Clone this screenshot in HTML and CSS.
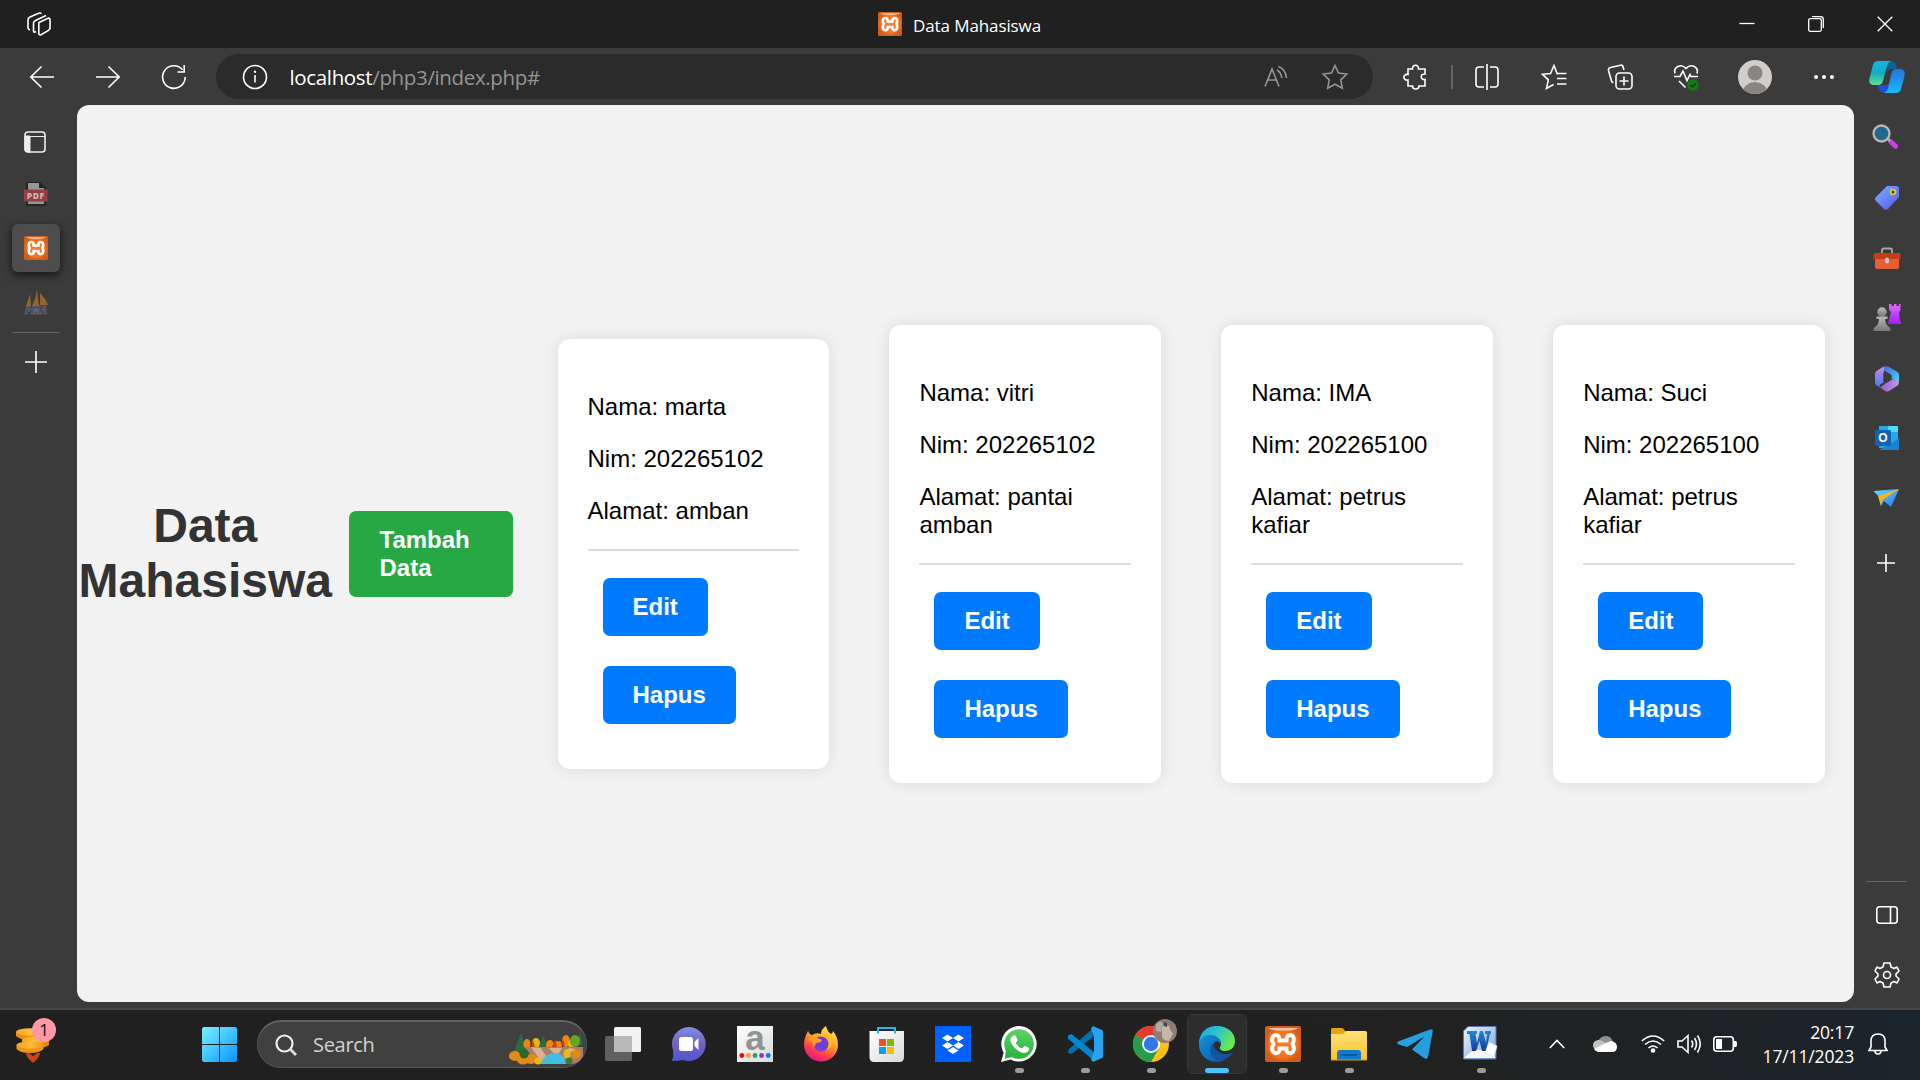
FILE: index.html
```html
<!DOCTYPE html>
<html lang="id">
<head>
<meta charset="utf-8">
<title>Data Mahasiswa</title>
<link rel="stylesheet" href="styles.css">
</head>
<body>
<svg class="defs" width="0" height="0" aria-hidden="true">
  <defs>
    <radialGradient id="orange"><stop offset="0" stop-color="#ff7b25"/><stop offset=".75" stop-color="#f5731f"/><stop offset="1" stop-color="#cf5f1b"/></radialGradient>
    <linearGradient id="win" x2="1" y2="1"><stop stop-color="#7af2ff"/><stop offset="1" stop-color="#0a94ff"/></linearGradient>
    <linearGradient id="cyanGreen" x2="0" y2="1"><stop stop-color="#14b5ea"/><stop offset=".5" stop-color="#12abc5"/><stop offset="1" stop-color="#62df8e"/></linearGradient>
    <linearGradient id="blueCyan" x2="0" y2="1"><stop stop-color="#2474dd"/><stop offset="1" stop-color="#18b9fb"/></linearGradient>
    <linearGradient id="tag" x2="1" y2="1"><stop stop-color="#76b4ff"/><stop offset="1" stop-color="#5954f0"/></linearGradient>
    <linearGradient id="purple" x2="0" y2="1"><stop stop-color="#e06bf5"/><stop offset="1" stop-color="#9b1fff"/></linearGradient>
    <linearGradient id="grey" x2="0" y2="1"><stop stop-color="#b9b9b9"/><stop offset="1" stop-color="#777"/></linearGradient>
    <linearGradient id="plane" x2="1" y2="1"><stop stop-color="#5fe0ff"/><stop offset="1" stop-color="#2d72ee"/></linearGradient>
    <linearGradient id="coin" x2="1" y2="0"><stop stop-color="#f9a21e"/><stop offset=".5" stop-color="#ffbe3c"/><stop offset="1" stop-color="#f0921a"/></linearGradient>
    <linearGradient id="chat" x2="0" y2="1"><stop stop-color="#7d8fe8"/><stop offset=".5" stop-color="#7462bd"/><stop offset="1" stop-color="#4f56d2"/></linearGradient>
    <linearGradient id="fox" x1=".8" x2=".3" y2="1"><stop stop-color="#fff04a"/><stop offset=".45" stop-color="#ff9a24"/><stop offset=".75" stop-color="#ff3c4b"/><stop offset="1" stop-color="#e3138b"/></linearGradient>
    <linearGradient id="bag" x2="1" y2="1"><stop stop-color="#fff"/><stop offset="1" stop-color="#d9d9d9"/></linearGradient>
    <linearGradient id="wa" x2="0" y2="1"><stop stop-color="#5ed267"/><stop offset="1" stop-color="#26b33f"/></linearGradient>
    <linearGradient id="edgeTop" x2="1" y2=".4"><stop stop-color="#1f9ee0"/><stop offset=".5" stop-color="#2bc3d2"/><stop offset="1" stop-color="#68e84c"/></linearGradient>
    <linearGradient id="edgeLow" x2="1" y2="1"><stop stop-color="#1691d9"/><stop offset="1" stop-color="#0a55a8"/></linearGradient>
    <linearGradient id="folder" x2="0" y2="1"><stop stop-color="#ffe07a"/><stop offset="1" stop-color="#fdc225"/></linearGradient>
    <linearGradient id="word" x2="1" y2="1"><stop stop-color="#e9f1fb"/><stop offset="1" stop-color="#7fa3d8"/></linearGradient>
    <linearGradient id="wordW" x2="0" y2="1"><stop stop-color="#1d8ad6"/><stop offset="1" stop-color="#173a94"/></linearGradient>
    <linearGradient id="mA" x2="0" y2="1"><stop stop-color="#c48be6"/><stop offset="1" stop-color="#4a7bec"/></linearGradient>
    <linearGradient id="mB" x2="1" y2="1"><stop stop-color="#3d6fdc"/><stop offset="1" stop-color="#4fd2fb"/></linearGradient>
    <linearGradient id="mC" x2="1" y2="0"><stop stop-color="#8c5fcc"/><stop offset="1" stop-color="#c994e4"/></linearGradient>
    <clipPath id="avatarClip"><circle cx="17" cy="17" r="17"/></clipPath>
    <symbol id="xampp" viewBox="0 0 36 36">
      <rect width="36" height="36" rx="2.5" fill="url(#orange)"/>
      <path d="M3.500 2H32.500C31 4 27 4.500 18 4.500S5 4 3.500 2Z" fill="#fff" opacity=".6"/>
      <path d="M14.500 14.500C14.500 11 13 9 11 9C7.500 9 5.800 13.500 8.500 18C5.800 22.500 7.500 27.200 11 27.200C14 27.200 14.800 25 14.600 22.500H21.400C21.200 25 22 27.200 25 27.200C28.500 27.200 30.200 22.500 27.500 18C30.200 13.500 28.500 9 25 9C23 9 21.500 11 21.500 14.500Z" fill="none" stroke="#fff" stroke-width="4"/>
    </symbol>
  </defs>
</svg>

<header class="titlebar">
  <svg class="workspaces" viewBox="0 0 24 24" width="24" height="24"><g class="line"><path d="M12 10.500 21 6.200Q22.800 5.800 23 8V16.500L21.500 18.500 14 22.800Q11.800 23.500 11.800 21V11.500Z"/><path d="M19 3.500 8.500 8.500Q6.500 9.500 6.500 11V19Q7 21 9 19.500"/><path d="M14.500 1.500Q13 .5 11 1.500L3 5Q1 6 1 8V16Q1.200 17.500 3 18"/></g></svg>
  <div class="window-title"><svg width="24" height="24"><use href="#xampp"/></svg><span>Data Mahasiswa</span></div>
  <div class="window-controls">
    <svg viewBox="0 0 16 16" width="16" height="16"><path class="line thin" d="M.5 7.500H15.500"/></svg>
    <svg viewBox="0 0 16 16" width="16" height="16"><g class="line thin"><rect x=".7" y="2.700" width="12.600" height="12.600" rx="1.500"/><path d="M4 .7H12.500Q15.300 .7 15.300 3.500V12"/></g></svg>
    <svg viewBox="0 0 16 16" width="16" height="16"><path class="line thin" d="M.7.7 15.300 15.300M15.300.7.7 15.300"/></svg>
  </div>
</header>

<nav class="toolbar">
  <div class="nav-buttons">
    <svg viewBox="0 0 24 24" width="24" height="24"><path class="line" d="M24 12H.8M11.500 1.500.8 12 11.500 22.500"/></svg>
    <svg viewBox="0 0 24 24" width="24" height="24"><path class="line" d="M0 12H23.200M12.500 1.500 23.200 12 12.500 22.500"/></svg>
    <svg viewBox="0 0 24 24" width="24" height="24"><path class="line" d="M23.200 12A11.300 11.300 0 1 1 20.500 4.700M22.200 0V7H15.500"/></svg>
  </div>
  <div class="address">
    <svg class="info" viewBox="0 0 26 26" width="26" height="26"><circle class="line" cx="13" cy="13" r="11.500"/><path class="line" d="M13 11V18.500"/><circle cx="13" cy="7.800" r="1.200" fill="#fff"/></svg>
    <span class="url"><b>localhost</b>/php3/index.php#</span>
    <svg class="read-aloud" viewBox="0 0 24 24" width="24" height="24"><path class="line dim" d="M1 21.500 8 4 15 21.500M3.500 15H12.500M13 5Q17 7.500 17.800 13M14.500 1.500Q21.500 4 22.500 13"/></svg>
    <svg class="fav" viewBox="0 0 26 26" width="26" height="26"><path class="line dim" d="M13 1.500 16.500 9 24.800 10 18.800 15.800 20.300 24.200 13 20.200 5.700 24.200 7.200 15.800 1.200 10 9.500 9Z"/></svg>
  </div>
  <div class="actions">
    <svg class="a-ext" viewBox="0 0 24 26" width="24" height="26"><path class="line" d="M5 5H9.500C9 0 16 0 15.500 5H22V10C17 9.500 17 16 22 15.500V22H16C16 26 9.500 26 9.500 22H5V16C-.5 17 -.5 9.500 5 10.500Z"/></svg>
    <i class="a-sep"></i>
    <svg class="a-split" viewBox="0 0 24 26" width="24" height="26"><path class="line" d="M9 3H4Q1 3 1 6V20Q1 23 4 23H9M15 3H20Q23 3 23 6V20Q23 23 20 23H15M12 0V26"/></svg>
    <svg class="a-favs" viewBox="0 0 26 26" width="26" height="26"><path class="line" d="M16.500 10.500 13 1.500 9.500 9.500 1.500 10.300 7.300 15.800 5.500 24.500 12.500 20.500M16.500 9.500H25.500M16 14.500H25.500M16 20H25.500"/></svg>
    <svg class="a-coll" viewBox="0 0 26 26" width="26" height="26"><g class="line"><rect x="9" y="9" width="16" height="16" rx="3.500"/><path d="M17 12.500V21.500M12.500 17H21.500M17 6 16 2.500Q15.500.8 13.500 1.200L3.500 3.500Q1 4.200 1.500 6.500L4.500 17Q5 18.800 6.500 18.500"/></g></svg>
    <svg class="a-heart" viewBox="0 0 26 28" width="26" height="28"><path class="line" d="M2 10.500C0 4 8 0 13 5.500C18 0 26 4 24 10.500M1 13.500H7L10 8 14 17.500 17 11.500 18 13.500H25M6 18 12.500 24.500"/><circle cx="20" cy="22" r="5.700" fill="#107c10"/><path d="M17.300 22 19.300 24 23 20.300" fill="none" stroke="#213421" stroke-width="1.300"/></svg>
    <svg class="a-user" viewBox="0 0 34 34" width="34" height="34"><circle cx="17" cy="17" r="17" fill="#d0cdca"/><g fill="#888583" clip-path="url(#avatarClip)"><circle cx="17" cy="13" r="7.500"/><ellipse cx="17" cy="32" rx="12" ry="10"/></g></svg>
    <svg class="a-dots" viewBox="0 0 20 6" width="20" height="6"><g fill="#fff"><circle cx="2" cy="3" r="2"/><circle cx="10" cy="3" r="2"/><circle cx="18" cy="3" r="2"/></g></svg>
    <svg class="a-copilot" viewBox="0 0 36 34" width="36" height="34"><path d="M17 1H22Q26 1 27 5L28 9H22Q19 9 18 13Z" fill="#0b6390"/><path d="M8 25H18L21 22 17 33H16Q11 33 10 29Z" fill="#204ed7"/><path d="M9 1H22Q19 2 18 6L14 21Q13 25 9 25H4Q-1 24 .5 18L4 5Q5 1 9 1Z" fill="url(#cyanGreen)"/><path d="M27 9H32Q37 10 35.500 16L32 29Q31 33 27 33H15Q18 32 19 28L22.500 13Q23.500 9 27 9Z" fill="url(#blueCyan)"/></svg>
  </div>
</nav>

<div class="middle">
  <aside class="tabs">
    <div class="tab tab-panel"><svg viewBox="0 0 22 22" width="22" height="22"><rect x="1" y="1" width="20" height="20" rx="3" fill="none" stroke="#eee" stroke-width="1.600"/><path d="M1 5.500H21M1 5H6V21H3Q1 20 1 18Z" fill="#eee" stroke="#eee" stroke-width="1"/></svg></div>
    <div class="tab tab-pdf"><svg viewBox="0 0 24 24" width="24" height="24"><path d="M2 0H16L22 6V24H2Z" fill="#252525"/><path d="M4 1H15V6H20V22H4Z" fill="#969696"/><path d="M0 7.500H23.500V19.500H0Z" fill="#983f42"/><text x="11.800" y="16.800" class="pdf-text">PDF</text></svg></div>
    <div class="tab tab-active"><svg width="24" height="24"><use href="#xampp"/></svg></div>
    <div class="tab tab-pma"><svg viewBox="0 0 24 24" width="24" height="24"><path d="M2 16 6 4 7 16ZM8 16Q12 8 13 0L15 16ZM16 15 16 3Q22 9 24 15Z" fill="#94642b"/><text x="12" y="23.500" class="pma-text">PMA</text></svg></div>
    <i class="rule"></i>
    <div class="tab tab-new"><svg viewBox="0 0 22 22" width="22" height="22"><path class="line" d="M11 0V22M0 11H22"/></svg></div>
  </aside>

  <main class="page">
    <h1>Data Mahasiswa</h1>
    <a class="button button-add">Tambah Data</a>
    <section class="card"><p>Nama: marta</p><p>Nim: 202265102</p><p>Alamat: amban</p><div class="card-actions"><a class="button">Edit</a><a class="button">Hapus</a></div></section>
    <section class="card"><p>Nama: vitri</p><p>Nim: 202265102</p><p>Alamat: pantai amban</p><div class="card-actions"><a class="button">Edit</a><a class="button">Hapus</a></div></section>
    <section class="card"><p>Nama: IMA</p><p>Nim: 202265100</p><p>Alamat: petrus kafiar</p><div class="card-actions"><a class="button">Edit</a><a class="button">Hapus</a></div></section>
    <section class="card"><p>Nama: Suci</p><p>Nim: 202265100</p><p>Alamat: petrus kafiar</p><div class="card-actions"><a class="button">Edit</a><a class="button">Hapus</a></div></section>
  </main>

  <aside class="sidebar">
    <div class="side side-search"><svg viewBox="0 0 28 28" width="28" height="28"><path d="M19 19 23.500 23.200" stroke="#c542ed" stroke-width="5" stroke-linecap="round"/><path d="M15 15 18 18" stroke="#aaa" stroke-width="3"/><circle cx="9.500" cy="10.500" r="8" fill="#22678c" stroke="#b9b6b4" stroke-width="2.300"/></svg></div>
    <div class="side"><svg viewBox="0 0 28 28" width="28" height="28"><path d="M14 2H23Q26 2 26 5V13L15 25Q13 26.500 11 25L3 17Q1 15 3 13Z" fill="url(#tag)"/><circle cx="20" cy="8" r="2.400" fill="#334" stroke="#f2cc0c" stroke-width="1.800"/></svg></div>
    <div class="side"><svg viewBox="0 0 28 28" width="28" height="28"><path d="M9 9V6Q9 4.500 11 4.500H17Q19 4.500 19 6V9" fill="none" stroke="#a9a9a9" stroke-width="1.800"/><path d="M2 13H26V23Q26 25 24 25H4Q2 25 2 23Z" fill="#e85e34"/><path d="M2 9H26Q27.500 9 27.500 11V15H.5V11Q.5 9 2 9Z" fill="#c43e12"/><rect x="12" y="13.500" width="4" height="6" rx="2" fill="#c9c9c9"/></svg></div>
    <div class="side"><svg viewBox="0 0 28 28" width="28" height="28"><path d="M16 0H18.500V2H21V0H23.500V2H26V0H27.500V6L26 8 27 17H28V20H15L18 8 16 6Z" fill="url(#purple)"/><g fill="url(#grey)"><circle cx="9" cy="8" r="4.700"/><path d="M3.500 12.500H14.500V15H12Q12 20 16 23Q18 24 17.500 27H.5Q0 24 2 23Q6 20 6 15H3.500Z"/></g></svg></div>
    <div class="side side-365"><svg viewBox="0 0 28 28" width="28" height="28"><path d="M12 1.500Q10.500 1.500 9 2.500L3.500 6Q2 7 2 9V17.500Q2 19 3.500 20.500L7 22.500Q6 21 7 19.500L10.500 17.500V8Z" fill="url(#mA)"/><path d="M12 1.500Q14 .8 16 2L24.500 7Q26 8 26 10V17.500L18.500 13.500V10L11 5.500Q10.500 2.500 12 1.500Z" fill="url(#mB)"/><path d="M26 16.500Q26 19.500 24.500 20.500L16 26Q14 27 12 26L7 22.500 18.500 14Z" fill="url(#mC)"/><path d="M10.500 8.500 14 7.500 18.500 10V15L14 17.800 10.500 16Z" fill="#3b3b3b"/></svg></div>
    <div class="side"><svg viewBox="0 0 28 28" width="28" height="28"><path d="M6 2H25V24H6Z" fill="#28a8ea"/><path d="M15 2H25V8H15Z" fill="#50d9ff"/><path d="M15 8H25V14H15Z" fill="#28a8ea"/><path d="M6 26H26V14L17 20Z" fill="#1784d2"/><rect x="2" y="6" width="16" height="16" rx="1.500" fill="#0f64b8"/><text x="9.800" y="18.300" class="outlook-text">O</text></svg></div>
    <div class="side"><svg viewBox="0 0 28 28" width="28" height="28"><path d="M.5 7 26 5 18 23 11 17 8 22 6 13Z" fill="url(#plane)"/><path d="M26 5 5 12 8 22 9.500 16Z" fill="#f8b515"/></svg></div>
    <div class="side side-plus"><svg viewBox="0 0 18 18" width="18" height="18"><path class="line" d="M9 0V18M0 9H18"/></svg></div>
    <i class="rule"></i>
    <div class="side"><svg viewBox="0 0 22 18" width="22" height="18"><rect class="line" x=".8" y=".8" width="20.400" height="16.400" rx="3"/><path class="line" d="M14.500 1V17"/></svg></div>
    <div class="side"><svg viewBox="0 0 26 28" width="26" height="28"><g class="line"><circle cx="13" cy="14" r="3.500"/><path d="M10 2H16L17 6 20 7.500 23 6 25 10 22 13V15L25 18 23 22 20 20.500 17 22 16 26H10L9 22 6 20.500 3 22 1 18 4 15V13L1 10 3 6 6 7.500 9 6Z" stroke-linejoin="round"/></g></svg></div>
  </aside>
</div>

<footer class="taskbar">
  <div class="widgets"><svg viewBox="0 0 34 36" width="34" height="36"><path d="M0 5V9Q4 13 14 13T28 9V5Z" fill="#ee8c12"/><ellipse cx="14" cy="5" rx="14" ry="3.800" fill="url(#coin)"/><path d="M6 13V18Q10 21 20 21T33 18V13Z" fill="#e88410"/><ellipse cx="19.500" cy="13" rx="13.500" ry="3.600" fill="url(#coin)"/><path d="M.5 18V22Q4 26 14 26T27.500 22V18Z" fill="#f09418"/><ellipse cx="14" cy="18" rx="13.500" ry="3.600" fill="url(#coin)"/></svg><svg class="heart" viewBox="0 0 14 10" width="14" height="10"><path d="M0 0Q2-1 7 3Q12-1 14 0Q14 4 7 10Q0 4 0 0Z" fill="#cf4214"/></svg><span class="badge">1</span></div>
  <svg class="start" viewBox="0 0 35 35" width="35" height="35"><path d="M1.500 0H17V17H0V1.500ZM18 0H33.500L35 1.500V17H18ZM0 18H17V35H1.500L0 33.500ZM18 18H35V33.500L33.500 35H18Z" fill="url(#win)"/></svg>
  <div class="search">
    <svg viewBox="0 0 22 22" width="22" height="22"><circle cx="9.500" cy="9.500" r="8" fill="none" stroke="#eee" stroke-width="2.200"/><path d="M15 15 21 21" stroke="#ddd" stroke-width="2.800"/></svg>
    <span>Search</span>
    <svg class="scene" viewBox="0 0 74 32" width="74" height="32"><path d="M5 18 12 0 18 18ZM30 14 34 2 39 14ZM66 12 71 0 74 12Z" fill="#2c6b3e"/><g fill="#f08612"><ellipse cx="18" cy="11" rx="3.500" ry="5"/><ellipse cx="41" cy="12" rx="4" ry="5"/><ellipse cx="49" cy="12" rx="4" ry="4"/><ellipse cx="57" cy="8" rx="4" ry="6"/></g><g fill="#e4b514"><ellipse cx="27" cy="10" rx="4" ry="5"/><ellipse cx="62" cy="11" rx="3" ry="4"/></g><ellipse cx="66" cy="8" rx="5" ry="6" fill="#65a825"/><path d="M22 14 24 7 26 14ZM43 14 46 6 48 14ZM52 12 54 6 56 12Z" fill="#cc3b16"/><path d="M16 14H74V23Q70 31 62 31H28Z" fill="#a97d67"/><path d="M22 14 34 31H42L32 15ZM40 15 48 24 53 15ZM60 15 56 23 67 16Z" fill="#d9b196"/><path d="M31 31Q36 20 46 20Q55 20 57 31Z" fill="#43bde0"/><g fill="#e38a12"><ellipse cx="6" cy="23" rx="6" ry="5"/><ellipse cx="22" cy="26" rx="7" ry="5"/><ellipse cx="14" cy="27" rx="6" ry="4.500"/><circle cx="67" cy="21" r="4.500"/></g><g fill="#e9b91b"><circle cx="29" cy="28" r="3.500"/><ellipse cx="58" cy="21" rx="3.500" ry="5"/></g><circle cx="15" cy="21" r="4.500" fill="#27682d"/><circle cx="60" cy="28" r="3.500" fill="#387b2d"/></svg>
  </div>
  <div class="apps">
    <div class="app"><svg viewBox="0 0 36 36" width="36" height="36"><rect x="0" y="10" width="27" height="25" rx="1.500" fill="#606060"/><rect x="9" y="1" width="27" height="25" rx="1.500" fill="#f2f2f2"/><path d="M9 10H27V26H9Z" fill="#b9b9b9"/></svg></div>
    <div class="app"><svg viewBox="0 0 36 36" width="36" height="36"><path d="M18 1A17 17 0 1 1 12 34Q8 35 1 35Q3 30 2 24A17 17 0 0 1 18 1Z" fill="url(#chat)"/><rect x="8" y="11" width="14" height="14" rx="2.500" fill="#fff"/><path d="M23.500 16 27.500 12V24L23.500 20Z" fill="#fff"/></svg></div>
    <div class="app"><svg viewBox="0 0 36 36" width="36" height="36"><rect width="36" height="36" fill="url(#bag)"/><text x="18" y="23.500" class="amazon-text">a</text><circle cx="4.800" cy="29.500" r="2.400" fill="#f4000c"/><circle cx="11.400" cy="29.500" r="2.400" fill="#fd981b"/><circle cx="18" cy="29.500" r="2.400" fill="#16a762"/><circle cx="24.600" cy="29.500" r="2.400" fill="#9130d9"/><circle cx="31.200" cy="29.500" r="2.400" fill="#0583e8"/></svg></div>
    <div class="app"><svg viewBox="0 0 36 36" width="36" height="36"><path d="M5 5Q6 8 9 9Q13 6 18 8Q18 3 23 0Q24 5 28 8Q30 7 30 5Q35 11 35 19A17 16.500 0 0 1 1 19Q1 12 5 5Z" fill="url(#fox)"/><circle cx="18" cy="18" r="7.500" fill="#713edb"/><path d="M5 14Q9 8 14 12L19 14Q18 17 13 17Q12 18 12 21Q9 18 9 15Z" fill="#ffa12c"/><path d="M17 10Q25 10 26 17Q26 22 22 25Q30 22 29 14Q26 8 20 8Z" fill="#ffb628"/></svg></div>
    <div class="app"><svg viewBox="0 0 36 36" width="36" height="36"><path d="M.5 5H35V31Q35 36 30.500 36H5Q.5 36 .5 31Z" fill="url(#bag)"/><path d="M9 7.500V2H26V7.500" fill="none" stroke="#26b4ed" stroke-width="2"/><path fill="#f25022" d="M10 13H17V20H10Z"/><path fill="#7fba00" d="M18 13H25V20H18Z"/><path fill="#00a4ef" d="M10 21H17V28H10Z"/><path fill="#ffb900" d="M18 21H25V28H18Z"/></svg></div>
    <div class="app"><svg viewBox="0 0 36 36" width="36" height="36"><rect width="36" height="36" fill="#0061fe"/><path d="M12.500 8.500 18 12 12.500 15.500 7 12ZM23.500 8.500 29 12 23.500 15.500 18 12ZM12.500 16 18 19.500 12.500 23 7 19.500ZM23.500 16 29 19.500 23.500 23 18 19.500ZM18 21 23.500 24.500 18 28 12.500 24.500Z" fill="#fff"/></svg></div>
    <div class="app running"><svg viewBox="0 0 36 36" width="36" height="36"><path d="M18 0A17.800 17.800 0 1 1 9.500 33.500L0 36 2.700 26.700A17.800 17.800 0 0 1 18 0Z" fill="#fff"/><circle cx="18" cy="18" r="14.800" fill="url(#wa)"/><path d="M3.800 32.500 5 24 12 31Z" fill="#29b440"/><path d="M12 9.500Q14 8.500 15 10.500L16.500 14Q16.500 15 14.700 17Q17 21 21 22.500L23 20.500Q24 19.500 25 20.300L28 22Q28.500 26.500 23.500 27Q19 27 14 22Q6 14 12 9.500Z" fill="#fff"/></svg></div>
    <div class="app running"><svg viewBox="0 0 36 36" width="36" height="36"><path d="M2 23 25.500 3 27 10 5 27.500Q2 28 .8 26.500Z" fill="#0670b3"/><path d="M1 9.500 4.500 8 28 27 26 34 .8 12.500Z" fill="#0486cd"/><path d="M26 0 36 4.500V31.500L26 36 24 33.500 27 26V10L24 2.500Z" fill="#27a4ed"/></svg></div>
    <div class="app running chrome"><svg viewBox="0 0 36 36" width="36" height="36"><circle cx="18" cy="18" r="18" fill="#fbc116"/><path d="M18 18 2.400 9A18 18 0 0 1 33.600 9Z" fill="#e33b2e"/><path d="M18 18 2.400 9A18 18 0 0 0 18 36L25.800 22.500Z" fill="#259b4c"/><circle cx="18" cy="18" r="9" fill="#fff"/><circle cx="18" cy="18" r="7.200" fill="#3277e8"/></svg><svg class="profile" viewBox="0 0 24 24" width="24" height="24"><circle cx="12" cy="12" r="12" fill="#8f7d71"/><path d="M9 8Q16 3 17 10L20 15 16 22Q8 22 9 14Z" fill="#c9b5a8"/><path d="M3 6Q7 0 10 5L8 13 3 12Z" fill="#b4aba5"/><path d="M11 3Q15 3 14 8L11 7Z" fill="#4b4146"/></svg></div>
    <div class="app running current"><svg viewBox="0 0 36 36" width="36" height="36"><path d="M0 19C0 5 9 0 18 0C29 0 36 7 36 15C36 22 31 25 26 25C22 25 19.500 23 21.500 20C24 15 18 9 11 10C5 11 1 15 0 19Z" fill="url(#edgeTop)"/><path d="M0 19C1 9 12 7 18 11Q23 15 22 18Q17 12 14 19Q11 33 27 32Q24 36 17 36C7 35.500 0 28 0 19Z" fill="url(#edgeLow)"/><path d="M14 17Q7 25 17 34Q28 36 34 26Q28 30 21 27Q15 24 14 17Z" fill="#1255a0"/></svg></div>
    <div class="app running"><svg width="36" height="36"><use href="#xampp"/></svg></div>
    <div class="app running"><svg viewBox="0 0 36 36" width="36" height="36"><path d="M0 3.500Q0 2 1.500 2H11Q12 2 13 3.500L15 6V10H0Z" fill="#e5a408"/><path d="M0 8H12L15 5H34.500Q36 5 36 6.500V34H0Z" fill="url(#folder)"/><path d="M6 34V27Q6 24 9 24H27Q30 24 30 27V34Z" fill="#1379cd"/><path d="M10 29H26" stroke="#0b4d91" stroke-width="1.500"/><path d="M0 34H36" stroke="#e49b0f"/></svg></div>
    <div class="app"><svg viewBox="0 0 36 36" width="36" height="36"><path d="M1 15.500 33 3.500Q36 2.500 35.800 5L31 31Q30 34 27 32L15 23.500 27.500 10.500 10 21 1.500 18.500Q-.8 17 1 15.500Z" fill="#25a0df"/></svg></div>
    <div class="app running"><svg viewBox="0 0 36 36" width="36" height="36"><path d="M5 .5H33V33H.5V5Z" fill="url(#word)" stroke="#5577b5"/><path d="M2 31 10 24H32V32H2Z" fill="#f4f6fa"/><path d="M4 5H14V8H12.500L14 17 17 5H20L23 17 24 8H22V5H28V8H27L23 25H19L16.500 15 13 25H9L6.500 8H4Z" fill="url(#wordW)"/><path d="M26 16 34 20 31 31 22 27Z" fill="#fff" stroke="#cfdaed" stroke-width=".7"/></svg></div>
  </div>
  <div class="tray">
    <svg class="t-up" viewBox="0 0 16 10" width="16" height="10"><path class="line" d="M.8 9 8 1.500 15.200 9"/></svg>
    <svg class="t-cloud" viewBox="0 0 24 16" width="24" height="16"><path d="M5 5Q8 0 13 0Q18 0 20 6L12 11Z" fill="#909090"/><path d="M5 4Q8 4 13 7L5 14Q0 14 0 9Q0 5 5 4Z" fill="#c4c4c4"/><path d="M13 7 18 5Q24 6 24 11Q24 16 19 16H5Q2 15 1 13Z" fill="#fff"/></svg>
    <svg class="t-wifi" viewBox="0 0 24 18" width="24" height="18"><path class="line" d="M.8 6Q12-4 23.200 6M4 9.500Q12 2.500 20 9.500M7.500 13Q12 9 16.500 13"/><circle cx="12" cy="15.500" r="2.300" fill="#fff"/></svg>
    <svg class="t-sound" viewBox="0 0 24 20" width="24" height="20"><path class="line" d="M1 7H5L11 1.500V18.500L5 13H1ZM14.500 6.500Q17 10 14.500 13.500M17.500 4Q21.500 10 17.500 16M20.500 1.500Q26 10 20.500 18.500"/></svg>
    <svg class="t-batt" viewBox="0 0 24 16" width="24" height="16"><rect class="line" x=".8" y=".8" width="19.500" height="14.400" rx="3"/><rect x="3" y="3" width="6" height="10" fill="#fff"/><path d="M21 5H23Q24 5 24 8T23 11H21Z" fill="#fff"/></svg>
    <div class="clock"><span>20:17</span><span>17/11/2023</span></div>
    <svg class="t-bell" viewBox="0 0 20 22" width="20" height="22"><path class="line" d="M1 17.500 3 14V8Q3 1 10 1T17 8V14L19 17.500ZM7 18Q7 21 10 21T13 18"/></svg>
  </div>
</footer>
</body>
</html>
```
FILE: styles.css
```css
* { box-sizing: border-box; }
body {
  margin: 0;
  width: 1920px;
  height: 1080px;
  overflow: hidden;
  display: flex;
  flex-direction: column;
  background: #3b3b3b;
  color: #fff;
  font-family: "Open Sans", "Noto Sans", sans-serif;
}
svg { display: block; flex: none; overflow: visible; }
.defs { position: absolute; }
.line { fill: none; stroke: #fff; stroke-width: 1.6; }
.thin { stroke-width: 1.3; }
.dim { stroke: #959595; }

/* Title bar */
.titlebar {
  flex: none;
  height: 48px;
  background: #202020;
  display: grid;
  grid-template-columns: 27px 851px 1fr auto;
  align-items: center;
}
.window-title { grid-column: 3; display: flex; align-items: center; gap: 11px; font-size: 17px; letter-spacing: -0.1px; }
.window-title span { line-height: 24px; padding-top: 4px; }
.workspaces { grid-column: 1 / 3; margin-left: 27px; }
.window-controls { display: flex; gap: 53px; margin-right: 27px; }

/* Toolbar */
.toolbar { flex: none; height: 57px; display: flex; align-items: center; }
.nav-buttons { display: flex; gap: 42px; margin: 0 30px; width: 156px; }
.address {
  flex: none;
  width: 1157px;
  height: 45px;
  border-radius: 23px;
  background: #2b2b2b;
  display: flex;
  align-items: center;
}
.info { margin-left: 26px; }
.url { margin-left: 21.5px; font-size: 20.5px; letter-spacing: -0.35px; color: #959595; line-height: 28px; }
.url b { font-weight: 400; color: #fff; }
.read-aloud { margin-left: auto; }
.fav { margin: 0 25px 0 34px; }
.actions { flex: 1; display: flex; align-items: center; }
.a-ext { margin-left: 30px; }
.a-sep { width: 1.5px; height: 24px; background: #636363; margin-left: 24px; }
.a-split { margin-left: 22px; }
.a-favs { margin-left: 42px; }
.a-coll { margin-left: 40px; }
.a-heart { margin-left: 40px; }
.a-user { margin-left: 39px; }
.a-dots { margin-left: 42px; }
.a-copilot { margin-left: 35px; }

/* Browser body */
.middle { flex: none; height: 905px; display: flex; align-items: flex-start; border-bottom: 2px solid #464646; }
.tabs { flex: none; width: 77px; padding: 13px 17px 0 12px; display: flex; flex-direction: column; }
.tab { width: 48px; height: 48px; display: flex; align-items: center; justify-content: center; margin-bottom: 4px; }
.tab-panel { padding-right: 2px; }
.tab-pdf { margin-bottom: 6px; }
.tab-active { background: #4d4d4d; border-radius: 6px; box-shadow: 0 3px 8px rgba(0, 0, 0, .65); margin-bottom: 6px; }
.tab-pma { margin-bottom: 6px; }
.rule { height: 1px; background: #636363; }
.tab-new { margin-top: 5px; padding-right: 1px; }
.pdf-text { font: 800 8.5px "Open Sans", sans-serif; fill: #c9b2b3; text-anchor: middle; letter-spacing: .6px; }
.pma-text { font: italic 800 10px "Open Sans", sans-serif; fill: #3d3f60; stroke: #8a8b9a; stroke-width: .4px; text-anchor: middle; }
.outlook-text { font: bold 12px "Liberation Sans", sans-serif; fill: #fff; text-anchor: middle; }

.page {
  flex: none;
  width: 1777px;
  height: 897px;
  background: #f2f2f2;
  border-radius: 12px;
  display: flex;
  align-items: center;
  font-family: "Liberation Sans", Arial, sans-serif;
  font-size: 24px;
  line-height: 28px;
  color: #000;
}
.page h1 { flex: none; width: 256.5px; margin: 0; padding-bottom: 1px; text-align: center; font-size: 48px; line-height: 55px; color: #333; }
.button {
  display: block;
  width: max-content;
  margin: 15px;
  padding: 15px 30px;
  border-radius: 7px;
  background: #007bff;
  color: #fff;
  font-weight: bold;
}
.button-add { width: 164px; flex: none; padding-left: 31px; background: #28a745; }
.card {
  flex: 1 1 0;
  margin: 0 30px;
  padding: 30px;
  border-radius: 12px;
  background: #fff;
  box-shadow: 0 0 15px rgba(0, 0, 0, .1);
}
.card:last-child { margin-right: 29px; }
.card p { margin: 24px 0; }
.card-actions { border-top: 2px solid #ddd; padding-top: 12px; display: flow-root; }
.card-actions .button + .button { margin-top: 30px; }

.sidebar { flex: none; width: 66px; height: 903px; padding: 3px 1px 0 0; display: flex; flex-direction: column; }
.side { height: 60px; display: flex; align-items: center; justify-content: center; }
.side-search { padding: 0 1px 2px 0; }
.side-365 { padding-top: 1px; }
.side-plus { margin-top: 5px; padding-right: 1px; }
.sidebar .rule { margin: auto 12px 3px; }
.sidebar .side:last-child { margin-bottom: 3px; }

/* Taskbar */
.taskbar {
  flex: none;
  height: 70px;
  display: flex;
  align-items: center;
  padding-bottom: 2px;
  background: linear-gradient(90deg, #202020 0, #212121 75%, #1e2327 92%, #1a252d 100%);
}
.widgets { position: relative; width: 34px; height: 36px; padding-top: 1px; margin: 0 152px 0 16px; }
.badge {
  position: absolute;
  left: 16px;
  top: -8px;
  width: 24px;
  height: 24px;
  border-radius: 50%;
  background: #ff99a4;
  color: #111;
  text-align: center;
  font-size: 17px;
  line-height: 23px;
}
.heart { position: absolute; left: 10px; top: 27px; }
.start { margin-right: 20px; }
.search {
  flex: none;
  width: 330px;
  height: 48px;
  border: 1px solid #555;
  border-top: 2px solid #626262;
  border-radius: 24px;
  background: #404040;
  display: flex;
  align-items: center;
  padding: 0 3px 0 17px;
}
.search span { font-size: 20px; color: #d2d2d2; margin-left: 16px; line-height: 28px; letter-spacing: -0.3px; }
.scene { margin: 8px 0 0 auto; }
.apps { display: flex; margin-left: 3px; }
.app { position: relative; width: 60px; height: 60px; margin: 0 3px; display: flex; align-items: center; justify-content: center; border-radius: 6px; }
.running::after { content: ""; position: absolute; bottom: 1px; width: 9px; height: 5px; border-radius: 3px; background: #9c9c9c; }
.current { background: #2d2d2d; border: 1px solid #363636; }
.current::after { width: 24px; bottom: 0; background: #4cc2ff; }
.profile { position: absolute; left: 32px; top: 5px; }
.amazon-text { font: bold 35px "Liberation Sans", sans-serif; fill: #929292; text-anchor: middle; }
.tray { display: flex; align-items: center; margin-left: 35px; }
.t-cloud { margin-left: 28px; }
.t-wifi { margin-left: 24px; }
.t-sound { margin-left: 12px; }
.t-batt { margin-left: 12px; }
.clock { width: 117px; display: flex; flex-direction: column; text-align: right; font-size: 17.5px; line-height: 24px; letter-spacing: -0.15px; }
.t-bell { margin-left: 14px; }
```
